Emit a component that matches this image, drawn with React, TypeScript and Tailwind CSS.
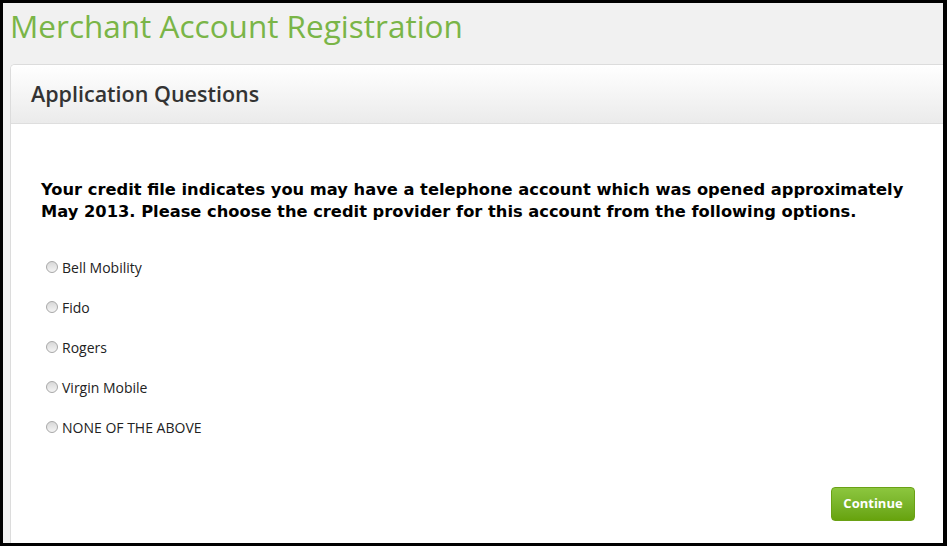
import React from "react";

const options = ["Bell Mobility", "Fido", "Rogers", "Virgin Mobile", "NONE OF THE ABOVE"];

export default function App() {
  return (
    <div className="w-[947px] h-[546px] bg-black pt-[3px] pl-[3px] pr-[4px] pb-[3px] overflow-hidden">
      <div className="w-full h-full bg-[#f1f1f1] flex flex-col overflow-hidden">
        <h1
          className="pl-[7px] pt-[3px] h-[61px] text-[31.5px] leading-[40px] text-[#7ab547] font-normal"
          style={{ fontFamily: '"Open Sans", sans-serif' }}
        >
          Merchant Account Registration
        </h1>
        <div className="ml-[7px] flex-1 flex flex-col bg-white border border-[#dcdcdc] border-r-0 border-b-0 rounded-tl-[5px] overflow-hidden">
          <div
            className="h-[59px] bg-gradient-to-b from-white to-[#ebebeb] border-b border-[#dedede] flex items-center pl-[20px]"
          >
            <h2
              className="text-[21.5px] font-semibold text-[#333] leading-none pb-[1px]"
              style={{ fontFamily: '"Open Sans", sans-serif' }}
            >
              Application Questions
            </h2>
          </div>
          <div className="flex-1 flex flex-col pl-[30px] pr-[24px]">
            <p
              className="mt-[55px] text-[16.3px] font-bold text-black leading-[22px]"
              style={{ fontFamily: '"DejaVu Sans", Verdana, sans-serif' }}
            >
              Your credit file indicates you may have a telephone account which was opened approximately May 2013. Please choose the credit provider for this account from the following options.
            </p>
            <div className="mt-[35px] flex flex-col gap-[22px] pl-[5px]">
              {options.map((o) => (
                <label
                  key={o}
                  className="flex items-center h-[18px] text-[14px] text-[#222]"
                  style={{ fontFamily: '"Open Sans", sans-serif' }}
                >
                  <span className="w-[12px] h-[12px] rounded-full border border-[#a8a8a8] bg-gradient-to-b from-[#d8d8d8] to-[#f4f4f4] mr-[4px] mb-[1px]" />
                  {o}
                </label>
              ))}
            </div>
            <div className="flex justify-end mt-[51px] pr-[4px]">
              <button
                className="w-[84px] h-[34px] rounded-[4px] bg-gradient-to-b from-[#8cc63e] to-[#67a30c] border border-[#6aa115] text-white font-bold text-[13px]"
                style={{ fontFamily: '"Open Sans", sans-serif' }}
              >
                Continue
              </button>
            </div>
          </div>
        </div>
      </div>
    </div>
  );
}
